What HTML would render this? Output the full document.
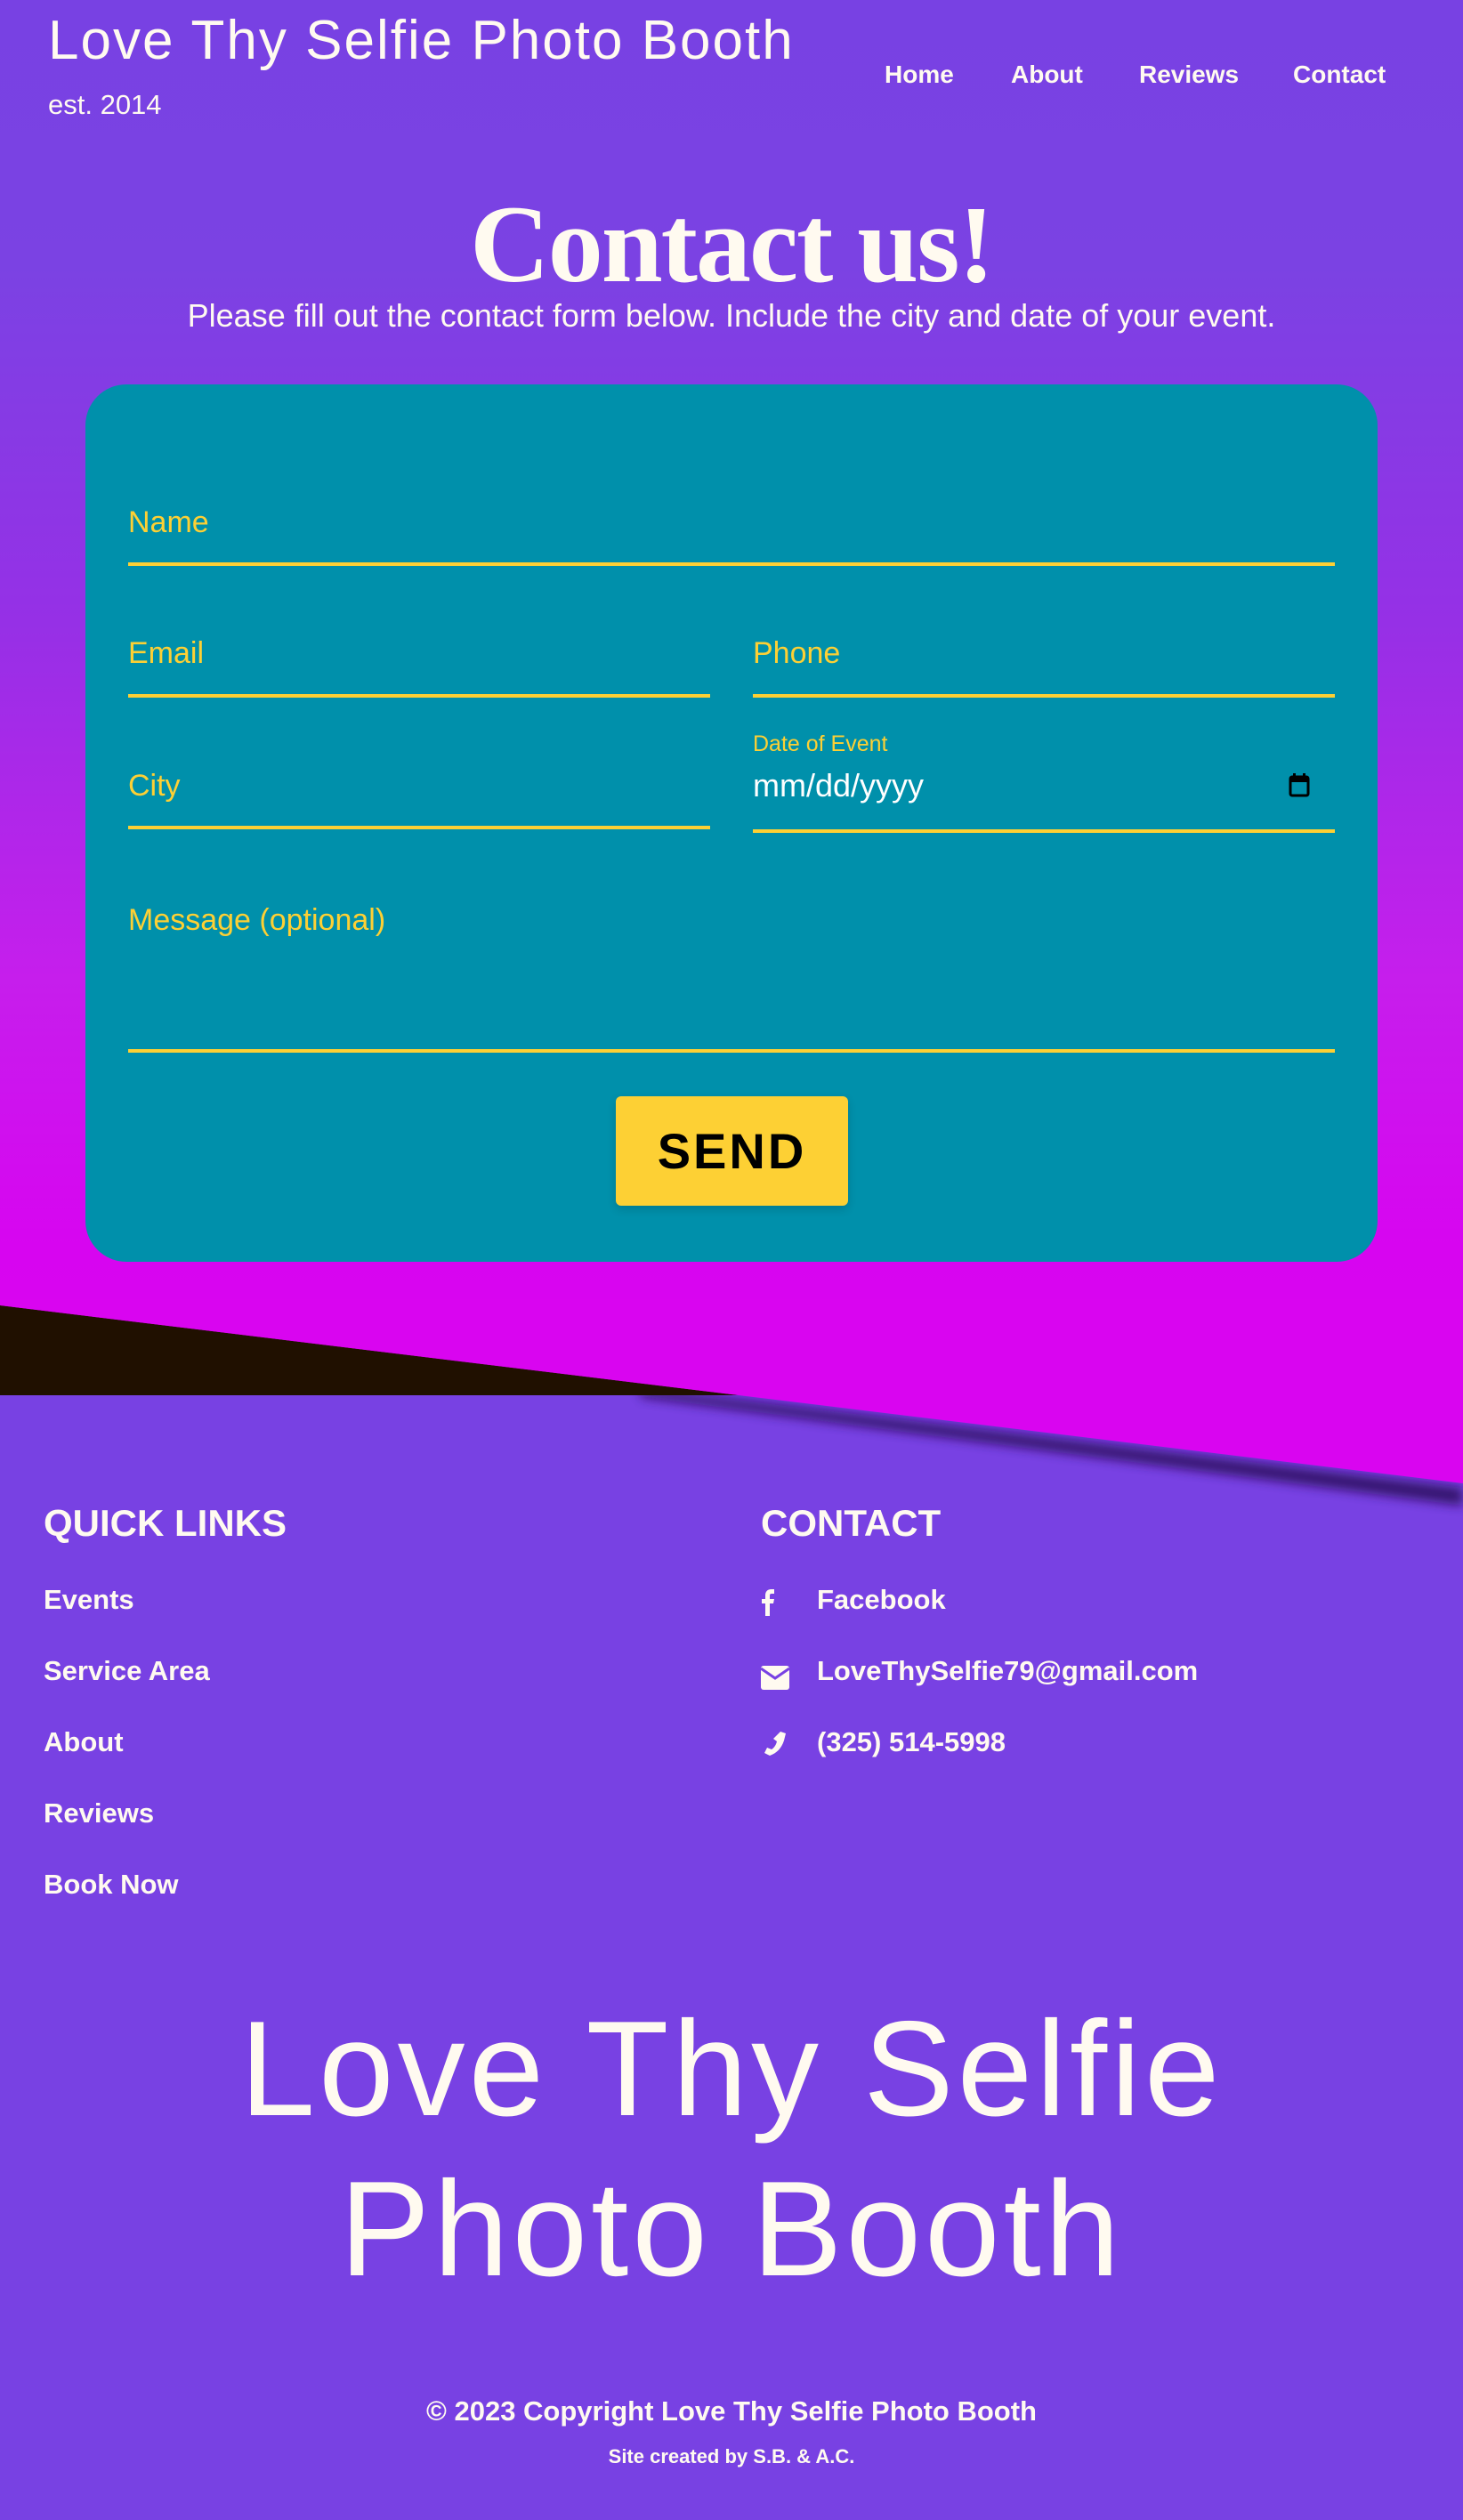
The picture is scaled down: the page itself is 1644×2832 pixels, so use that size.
<!DOCTYPE html>
<html><head><meta charset="utf-8"><style>
*{margin:0;padding:0;box-sizing:border-box}
body{width:1644px;height:2832px;position:relative;overflow:hidden;font-family:"Liberation Sans",sans-serif;color:#fffaf0;background:#7841e3}
.abs{position:absolute;white-space:nowrap}
#top{position:absolute;left:0;top:0;width:1644px;height:1567px;background:linear-gradient(180deg,#7841e3 0px,#7b42e3 300px,#9630e6 700px,#c61eec 1100px,#d705f0 1400px,#d905f0 1567px)}
.lbl{position:absolute;color:#fdd034;font-size:34px;white-space:nowrap}
.line{position:absolute;height:4px;background:#fdd034}
.nav{position:absolute;top:68px;font-size:28px;font-weight:bold}
.ql{position:absolute;left:49px;font-size:31px;font-weight:bold}
.ct{position:absolute;left:918px;font-size:31px;font-weight:bold}
</style></head><body>
<div id="top"></div>
<svg class="abs" style="left:0;top:1460px" width="1644" height="260">
<defs><filter id="bl" x="-10%" y="-50%" width="120%" height="200%"><feGaussianBlur stdDeviation="6"/></filter></defs>
<polygon points="720,100 1644,212 1644,232 720,110" fill="#2a0f5a" opacity=".85" filter="url(#bl)"/>
<polygon points="0,7 830,108 0,108" fill="#201000"/>
<polygon points="0,0 1644,0 1644,207 0,7" fill="#d905f0"/>
</svg>

<div class="abs" style="left:54px;top:10px;font-size:62px;letter-spacing:2px">Love Thy Selfie Photo Booth</div>
<div class="abs" style="left:54px;top:100px;font-size:31px">est. 2014</div>
<div class="nav" style="left:994px">Home</div>
<div class="nav" style="left:1136px">About</div>
<div class="nav" style="left:1280px">Reviews</div>
<div class="nav" style="left:1453px">Contact</div>

<div class="abs" style="left:0;width:1644px;text-align:center;top:204px;font-family:'Liberation Serif',serif;font-weight:bold;font-size:124px;letter-spacing:-2px">Contact us!</div>
<div class="abs" style="left:0;width:1644px;text-align:center;top:334px;font-size:36px">Please fill out the contact form below. Include the city and date of your event.</div>

<div class="abs" style="left:96px;top:432px;width:1452px;height:986px;background:#0090ab;border-radius:46px"></div>
<div class="lbl" style="left:144px;top:568px">Name</div>
<div class="line" style="left:144px;top:632px;width:1356px"></div>
<div class="lbl" style="left:144px;top:715px">Email</div>
<div class="line" style="left:144px;top:780px;width:654px"></div>
<div class="lbl" style="left:846px;top:715px">Phone</div>
<div class="line" style="left:846px;top:780px;width:654px"></div>
<div class="lbl" style="left:144px;top:864px">City</div>
<div class="line" style="left:144px;top:928px;width:654px"></div>
<div class="lbl" style="left:846px;top:822px;font-size:25px">Date of Event</div>
<div class="abs" style="left:846px;top:862px;font-size:36px;color:#fff">mm/dd/yyyy</div>
<svg class="abs" style="left:1448px;top:868px" width="24" height="28" viewBox="0 0 24 28"><rect x="2" y="5" width="20" height="21" rx="2" fill="none" stroke="#000" stroke-width="3"/><rect x="2" y="5" width="20" height="6" fill="#000"/><rect x="5" y="1" width="3" height="6" fill="#000"/><rect x="16" y="1" width="3" height="6" fill="#000"/></svg>
<div class="line" style="left:846px;top:932px;width:654px"></div>
<div class="lbl" style="left:144px;top:1015px">Message (optional)</div>
<div class="line" style="left:144px;top:1179px;width:1356px"></div>
<div class="abs" style="left:692px;top:1232px;width:261px;height:123px;background:#fdd034;border-radius:6px;box-shadow:0 4px 10px rgba(0,0,0,.15);text-align:center;line-height:123px;font-size:56px;font-weight:900;color:#000;letter-spacing:3px">SEND</div>

<div class="abs" style="left:49px;top:1688px;font-size:42px;font-weight:bold">QUICK LINKS</div>
<div class="abs" style="left:855px;top:1688px;font-size:42px;font-weight:bold">CONTACT</div>
<div class="ql" style="top:1780px">Events</div>
<div class="ql" style="top:1860px">Service Area</div>
<div class="ql" style="top:1940px">About</div>
<div class="ql" style="top:2020px">Reviews</div>
<div class="ql" style="top:2100px">Book Now</div>
<svg class="abs" style="left:855px;top:1786px" width="16" height="30" viewBox="0 0 16 30"><path d="M5 30V16H1v-5h4V7c0-4 2-7 7-7h3v5h-3c-1.5 0-2 .7-2 2v4h5l-1 5h-4v14z" fill="#fffaf0"/></svg>
<svg class="abs" style="left:855px;top:1872px" width="32" height="27" viewBox="0 0 32 27"><rect x="0" y="0" width="32" height="27" rx="3" fill="#fffaf0"/><path d="M0 3l16 11 16-11" fill="none" stroke="#7841e3" stroke-width="3"/></svg>
<svg class="abs" style="left:855px;top:1944px" width="30" height="30" viewBox="0 0 30 30"><path d="M22 2l6 2-2 8c-3 9-8 14-16 17l-6-3 3-6 5 2c3-2 5-5 6-9l-4-3z" fill="#fffaf0"/></svg>
<div class="ct" style="top:1780px">Facebook</div>
<div class="ct" style="top:1860px">LoveThySelfie79@gmail.com</div>
<div class="ct" style="top:1940px">(325) 514-5998</div>

<div class="abs" style="left:0;width:1644px;text-align:center;top:2235px;font-size:152px;line-height:180px;letter-spacing:4px">Love Thy Selfie<br>Photo Booth</div>
<div class="abs" style="left:0;width:1644px;text-align:center;top:2692px;font-size:31px;font-weight:bold">© 2023 Copyright Love Thy Selfie Photo Booth</div>
<div class="abs" style="left:0;width:1644px;text-align:center;top:2748px;font-size:22px;font-weight:bold">Site created by S.B. &amp; A.C.</div>
</body></html>
